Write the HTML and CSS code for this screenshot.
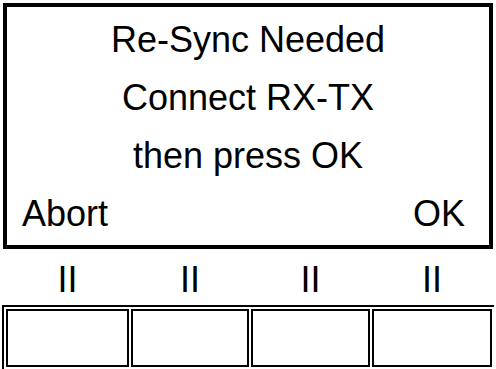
FILE: index.html
```html
<!DOCTYPE html>
<html lang="en">
<head>
    <meta charset="UTF-8">
    <title>Re-Sync</title>
    <link rel="stylesheet" href="styles.css">
</head>
<body>
<div id="screen">
    <div class="line">Re-Sync Needed</div>
    <div class="line">Connect RX-TX</div>
    <div class="line">then press OK</div>
    <div class="line soft_keys">
        <span>Abort</span>
        <span>OK</span>
    </div>
</div>
<div id="key_labels">
    <span class="key_1">II</span>
    <span class="key_2">II</span>
    <span class="key_3">II</span>
    <span class="key_4">II</span>
</div>
<table id="keys">
    <tr>
        <td class="key_1"></td>
        <td class="key_2"></td>
        <td class="key_3"></td>
        <td class="key_4"></td>
    </tr>
</table>
</body>
</html>
```

FILE: styles.css
```css
* {
    margin: 0;
    padding: 0;
    box-sizing: border-box;
}

html, body {
    overflow: hidden;
}

body {
    width: 496px;
    height: 369px;
    background: #fff;
    color: #000;
    font-family: "Liberation Sans", Arial, sans-serif;
    font-size: 36px;
}

#screen {
    margin: 3px;
    height: 246px;
    border: 4px solid #000;
    padding: 4px 0 2px;
}

.line {
    height: 58px;
    line-height: 58px;
    text-align: center;
}

.soft_keys {
    display: flex;
    justify-content: space-between;
    padding: 0 24px 0 15px;
}

#key_labels {
    display: flex;
    gap: 2px;
    margin: 11px 0 0 6px;
    height: 45px;
    line-height: 40px;
}

#key_labels span {
    text-align: center;
}

.key_1 {
    width: 123px;
}

.key_2 {
    width: 118px;
}

.key_3 {
    width: 119px;
}

.key_4 {
    width: 120px;
}

#keys {
    margin-left: 2px;
    border: 2px solid #000;
    border-right: 0;
    border-spacing: 2px;
    table-layout: fixed;
}

#keys td {
    border: 2px solid #000;
    height: 58px;
}
```
